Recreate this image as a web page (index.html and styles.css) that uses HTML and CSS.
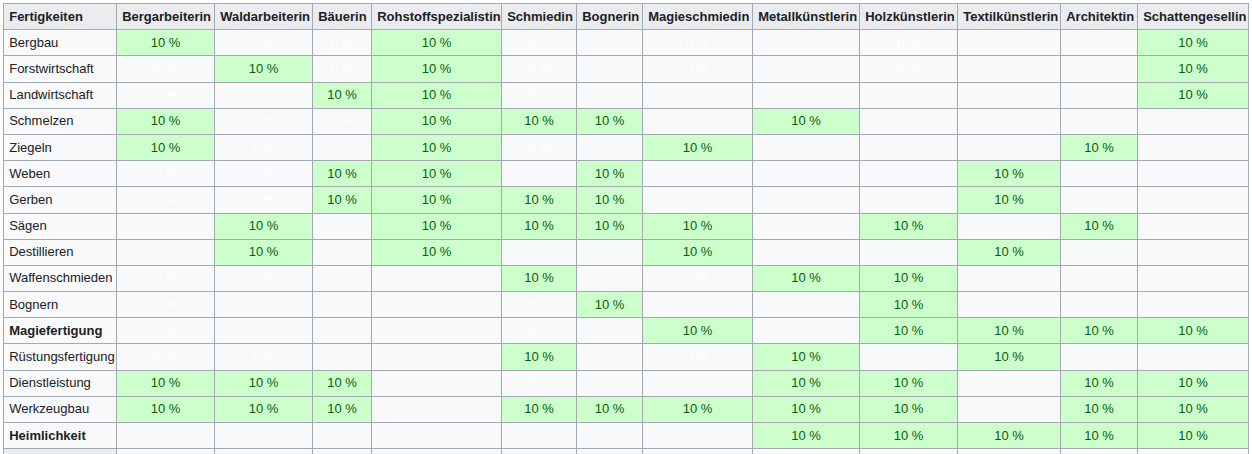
FILE: index.html
```html
<!DOCTYPE html>
<html lang="de">
<head>
<meta charset="utf-8">
<title>Fertigkeiten</title>
<link rel="stylesheet" href="styles.css">
</head>
<body>
<table class="wikitable">
<colgroup>
<col class="c-skill"><col class="c-berg"><col class="c-wald"><col class="c-bau"><col class="c-roh"><col class="c-schm"><col class="c-bog"><col class="c-mag"><col class="c-met"><col class="c-holz"><col class="c-tex"><col class="c-arch"><col class="c-schat">
</colgroup>
<thead>
<tr>
<th class="first">Fertigkeiten</th><th>Bergarbeiterin</th><th>Waldarbeiterin</th><th>Bäuerin</th><th>Rohstoffspezialistin</th><th>Schmiedin</th><th>Bognerin</th><th>Magieschmiedin</th><th>Metallkünstlerin</th><th>Holzkünstlerin</th><th>Textilkünstlerin</th><th>Architektin</th><th>Schattengesellin</th>
</tr>
</thead>
<tbody>
<tr><td class="name">Bergbau</td><td class="y">10 %</td><td class="n">0 %</td><td class="n">0 %</td><td class="y">10 %</td><td class="n">0 %</td><td></td><td class="n">0 %</td><td></td><td class="n">0 %</td><td></td><td></td><td class="y">10 %</td></tr>
<tr><td class="name">Forstwirtschaft</td><td class="n">0 %</td><td class="y">10 %</td><td class="n">0 %</td><td class="y">10 %</td><td class="n">0 %</td><td></td><td class="n">0 %</td><td></td><td class="n">0 %</td><td></td><td></td><td class="y">10 %</td></tr>
<tr><td class="name">Landwirtschaft</td><td class="n">0 %</td><td></td><td class="y">10 %</td><td class="y">10 %</td><td class="n">0 %</td><td></td><td class="n">0 %</td><td></td><td></td><td></td><td></td><td class="y">10 %</td></tr>
<tr><td class="name">Schmelzen</td><td class="y">10 %</td><td class="n">0 %</td><td class="n">0 %</td><td class="y">10 %</td><td class="y">10 %</td><td class="y">10 %</td><td class="n">0 %</td><td class="y">10 %</td><td></td><td></td><td></td><td></td></tr>
<tr><td class="name">Ziegeln</td><td class="y">10 %</td><td class="n">0 %</td><td></td><td class="y">10 %</td><td class="n">0 %</td><td></td><td class="y">10 %</td><td></td><td></td><td></td><td class="y">10 %</td><td></td></tr>
<tr><td class="name">Weben</td><td class="n">0 %</td><td class="n">0 %</td><td class="y">10 %</td><td class="y">10 %</td><td></td><td class="y">10 %</td><td></td><td></td><td></td><td class="y">10 %</td><td></td><td></td></tr>
<tr><td class="name">Gerben</td><td class="n">0 %</td><td class="n">0 %</td><td class="y">10 %</td><td class="y">10 %</td><td class="y">10 %</td><td class="y">10 %</td><td class="n">0 %</td><td></td><td></td><td class="y">10 %</td><td></td><td></td></tr>
<tr><td class="name">Sägen</td><td></td><td class="y">10 %</td><td></td><td class="y">10 %</td><td class="y">10 %</td><td class="y">10 %</td><td class="y">10 %</td><td></td><td class="y">10 %</td><td></td><td class="y">10 %</td><td></td></tr>
<tr><td class="name">Destillieren</td><td></td><td class="y">10 %</td><td></td><td class="y">10 %</td><td></td><td></td><td class="y">10 %</td><td></td><td></td><td class="y">10 %</td><td></td><td></td></tr>
<tr><td class="name">Waffenschmieden</td><td class="n">0 %</td><td class="n">0 %</td><td></td><td></td><td class="y">10 %</td><td></td><td class="n">0 %</td><td class="y">10 %</td><td class="y">10 %</td><td></td><td></td><td></td></tr>
<tr><td class="name">Bognern</td><td class="n">0 %</td><td></td><td></td><td></td><td class="n">0 %</td><td class="y">10 %</td><td class="n">0 %</td><td></td><td class="y">10 %</td><td></td><td></td><td></td></tr>
<tr><td class="name"><b>Magiefertigung</b></td><td class="n">0 %</td><td></td><td></td><td></td><td class="n">0 %</td><td></td><td class="y">10 %</td><td></td><td class="y">10 %</td><td class="y">10 %</td><td class="y">10 %</td><td class="y">10 %</td></tr>
<tr><td class="name">Rüstungsfertigung</td><td class="n">0 %</td><td class="n">0 %</td><td></td><td></td><td class="y">10 %</td><td></td><td class="n">0 %</td><td class="y">10 %</td><td></td><td class="y">10 %</td><td></td><td></td></tr>
<tr><td class="name">Dienstleistung</td><td class="y">10 %</td><td class="y">10 %</td><td class="y">10 %</td><td></td><td class="n">0 %</td><td></td><td></td><td class="y">10 %</td><td class="y">10 %</td><td></td><td class="y">10 %</td><td class="y">10 %</td></tr>
<tr><td class="name">Werkzeugbau</td><td class="y">10 %</td><td class="y">10 %</td><td class="y">10 %</td><td></td><td class="y">10 %</td><td class="y">10 %</td><td class="y">10 %</td><td class="y">10 %</td><td class="y">10 %</td><td></td><td class="y">10 %</td><td class="y">10 %</td></tr>
<tr><td class="name"><b>Heimlichkeit</b></td><td></td><td></td><td></td><td></td><td></td><td></td><td></td><td class="y">10 %</td><td class="y">10 %</td><td class="y">10 %</td><td class="y">10 %</td><td class="y">10 %</td></tr>
<tr><th class="first">&nbsp;</th><td></td><td></td><td></td><td></td><td></td><td></td><td></td><td></td><td></td><td></td><td></td><td></td></tr>
</tbody>
</table>
</body>
</html>
```
FILE: styles.css
```css
html, body {
  margin: 0;
  padding: 0;
  background: #ffffff;
  overflow: hidden;
}

body {
  font-family: "Liberation Sans", Arial, sans-serif;
  font-size: 13px;
  color: #202122;
}

.wikitable {
  margin: 3px 0 0 3px;
  width: 1245px;
  table-layout: fixed;
  border-collapse: collapse;
  background: #f8f9fa;
  color: #202122;
}

.wikitable th,
.wikitable td {
  border: 1px solid #a2a9b1;
  padding: 2.6px 5.2px;
  line-height: 20px;
  white-space: nowrap;
  overflow: hidden;
}

.wikitable th {
  background: #eaecf0;
  font-weight: bold;
  text-align: center;
}

.wikitable th.first {
  text-align: left;
}

.wikitable td {
  text-align: center;
}

.wikitable td.name {
  text-align: left;
}

.wikitable td.y {
  background: #cfc;
  color: #0b5d0b;
}

.wikitable td.n {
  color: #ffffff;
}

.c-skill { width: 113px; }
.c-berg { width: 98px; }
.c-wald { width: 98px; }
.c-bau { width: 59px; }
.c-roh { width: 130px; }
.c-schm { width: 75px; }
.c-bog { width: 66px; }
.c-mag { width: 110px; }
.c-met { width: 107px; }
.c-holz { width: 98px; }
.c-tex { width: 103px; }
.c-arch { width: 77px; }
.c-schat { width: 111px; }
```
